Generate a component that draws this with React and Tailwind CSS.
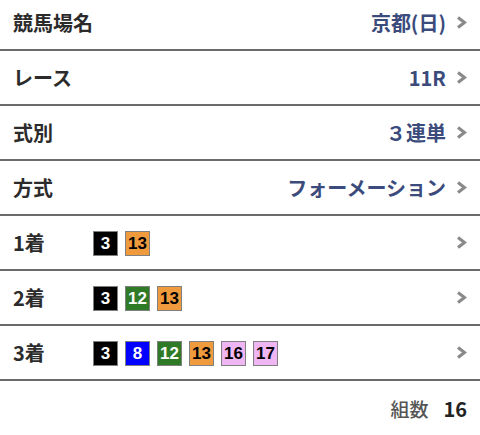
import React from "react";

const Chevron = () => (
  <svg width="11" height="13" viewBox="0 0 11 13" className="shrink-0 ml-[10px] block">
    <polyline points="2,1.5 8.5,6.5 2,11.5" fill="none" stroke="#8a8a8a" strokeWidth="3.2" strokeLinejoin="miter" />
  </svg>
);

const colors = {
  3: "bg-[#000000] text-white",
  8: "bg-[#0000ff] text-white",
  12: "bg-[#2f7a26] text-white",
  13: "bg-[#f09a3e] text-black",
  16: "bg-[#efb6f3] text-black",
  17: "bg-[#efb6f3] text-black",
};

const Badge = ({ n }) => (
  <div
    className={`w-[25px] h-[25px] border border-[#808080] flex items-center justify-center text-[17px] font-bold leading-none ${colors[n]}`}
    style={{ fontFamily: '"Liberation Sans", Arial, sans-serif' }}
  >
    {n}
  </div>
);

const settings = [
  { label: "競馬場名", value: "京都(日)" },
  { label: "レース", value: "11R" },
  { label: "式別", value: "３連単" },
  { label: "方式", value: "フォーメーション" },
];

const picks = [
  { label: "1着", nums: [3, 13] },
  { label: "2着", nums: [3, 12, 13] },
  { label: "3着", nums: [3, 8, 12, 13, 16, 17] },
];

export default function App() {
  return (
    <div
      className="w-[480px] h-[435px] overflow-hidden bg-white"
      style={{ fontFamily: '"Noto Sans CJK JP", "Noto Sans", sans-serif' }}
    >
      <div className="-mt-[4px]">
        {settings.map((s) => (
          <div key={s.label} className="h-[55px] border-b-2 border-[#6a6a6a] flex items-center pl-[13px] pr-[13px]">
            <span className="text-[20px] font-bold text-[#2b2b2b] leading-none">{s.label}</span>
            <span className="ml-auto text-[20px] font-bold text-[#3b4b7b] leading-none">{s.value}</span>
            <Chevron />
          </div>
        ))}
        {picks.map((p) => (
          <div key={p.label} className="h-[55px] border-b-2 border-[#6a6a6a] flex items-center pl-[13px] pr-[13px]">
            <span className="w-[80px] text-[20px] font-bold text-[#2b2b2b] leading-none">{p.label}</span>
            <div className="flex gap-[7px] mt-[2px]">
              {p.nums.map((n) => (
                <Badge key={n} n={n} />
              ))}
            </div>
            <div className="ml-auto">
              <Chevron />
            </div>
          </div>
        ))}
        <div className="h-[55px] flex items-center justify-end pr-[13px]">
          <span className="text-[19px] font-medium text-[#555] leading-none">組数</span>
          <span className="ml-[15px] text-[20px] font-bold text-[#222] leading-none">16</span>
        </div>
      </div>
    </div>
  );
}
